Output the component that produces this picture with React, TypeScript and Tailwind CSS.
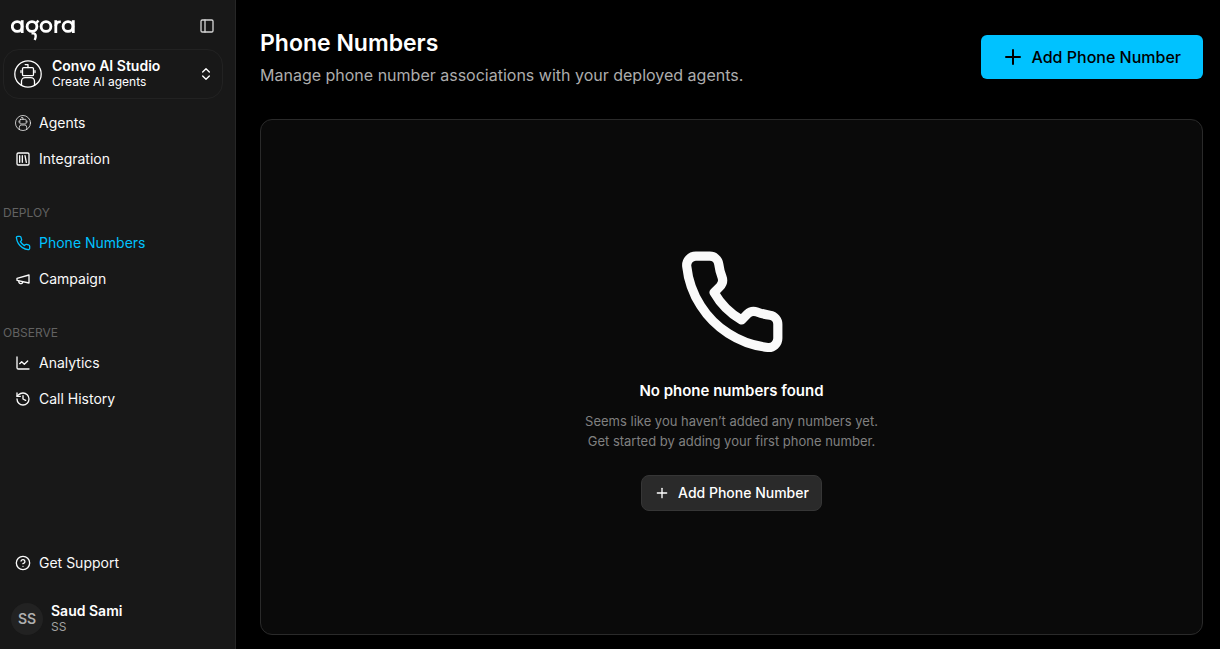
import React from 'react';
import {
  ChartLine,
  ChevronsUpDown,
  CircleHelp,
  History,
  PanelLeft,
  Plus,
  SquareLibrary,
} from 'lucide-react';

type IconProps = { className?: string; strokeWidth?: number };

const AgoraLogo: React.FC = () => (
  <svg
    role="img"
    aria-label="agora"
    className="w-16 h-6"
    viewBox="0 0 64 24"
    fill="none"
    stroke="white"
    strokeWidth="2.8"
  >
    <circle cx="6.2" cy="8.5" r="4.9" />
    <line x1="11.2" y1="2.2" x2="11.2" y2="15" />
    <circle cx="21" cy="8.5" r="4.9" />
    <line x1="25.4" y1="5" x2="27.4" y2="2.4" strokeWidth="2.4" />
    <path d="M20.5 15.4h1.600a2.600 2.600 0 0 1 2.600 2.600c0 1.800-.4 2.800-1 4" strokeWidth="2.4" />
    <circle cx="35" cy="8.5" r="4.9" />
    <line x1="44.8" y1="2.2" x2="44.8" y2="15" />
    <path d="M44.8 8c0-2.8 1.6-4.3 5-4.3" strokeWidth="2.6" />
    <circle cx="57" cy="8.5" r="4.9" />
    <line x1="62.3" y1="2.2" x2="62.3" y2="15" />
  </svg>
);

const AgentIcon: React.FC<IconProps> = ({ className, strokeWidth = 1.3 }) => (
  <svg
    aria-hidden="true"
    className={className}
    viewBox="0 0 28 28"
    fill="none"
    stroke="currentColor"
    strokeWidth={strokeWidth}
    strokeLinecap="round"
    strokeLinejoin="round"
  >
    <circle cx="14" cy="14" r="13.2" />
    <path d="M11.2 4.6h2.8v3" />
    <rect x="8.5" y="7.6" width="11" height="8" rx="1.2" />
    <path d="M7 10.6v2M21 10.6v2" />
    <path d="M7.5 25.4v-4.2a3.6 3.6 0 0 1 3.6-3.6h5.8a3.6 3.6 0 0 1 3.6 3.6v4.2" />
  </svg>
);

const PhoneIcon: React.FC<IconProps> = ({ className }) => (
  <svg
    aria-hidden="true"
    className={className}
    viewBox="0 0 24 24"
    fill="none"
    stroke="currentColor"
    strokeWidth="2"
    strokeLinecap="round"
    strokeLinejoin="round"
  >
    <path d="M22 16.92v3a2 2 0 0 1-2.18 2 19.79 19.79 0 0 1-8.63-3.07 19.5 19.5 0 0 1-6-6 19.79 19.79 0 0 1-3.07-8.67A2 2 0 0 1 4.11 2h3a2 2 0 0 1 2 1.72 12.84 12.84 0 0 0 .7 2.81 2 2 0 0 1-.45 2.11L8.09 9.91a16 16 0 0 0 6 6l1.27-1.27a2 2 0 0 1 2.11-.45 12.84 12.84 0 0 0 2.81.7A2 2 0 0 1 22 16.92z" />
  </svg>
);

const MegaphoneIcon: React.FC<IconProps> = ({ className }) => (
  <svg
    aria-hidden="true"
    className={className}
    viewBox="0 0 24 24"
    fill="none"
    stroke="currentColor"
    strokeWidth="2"
    strokeLinecap="round"
    strokeLinejoin="round"
  >
    <path d="m3 11 18-5v12L3 14v-3z" />
    <path d="M11.6 16.8a3 3 0 1 1-5.8-1.6" />
  </svg>
);

type NavItem = { label: string; icon: React.ElementType; active?: boolean };

const sections: { title?: string; items: NavItem[] }[] = [
  {
    items: [
      { label: 'Agents', icon: AgentIcon },
      { label: 'Integration', icon: SquareLibrary },
    ],
  },
  {
    title: 'DEPLOY',
    items: [
      { label: 'Phone Numbers', icon: PhoneIcon, active: true },
      { label: 'Campaign', icon: MegaphoneIcon },
    ],
  },
  {
    title: 'OBSERVE',
    items: [
      { label: 'Analytics', icon: ChartLine },
      { label: 'Call History', icon: History },
    ],
  },
];

const NavLink: React.FC<{ item: NavItem }> = ({ item }) => {
  const Icon = item.icon;
  return (
    <a
      href="#"
      aria-current={item.active ? 'page' : undefined}
      className={`flex items-center gap-2 h-9 px-3 text-sm ${
        item.active ? 'text-[#00c2ff]' : 'text-neutral-50'
      }`}
    >
      <Icon className="size-4 shrink-0" />
      {item.label}
    </a>
  );
};

const Sidebar: React.FC = () => (
  <aside className="flex flex-col w-59 shrink-0 bg-[#181818] border-r border-[#262626] pl-[3px] pr-3 pb-1.5">
    <div className="flex items-end justify-between h-12 px-2 pb-1.5">
      <AgoraLogo />
      <button type="button" aria-label="Toggle sidebar" className="pb-2 text-neutral-300">
        <PanelLeft className="size-4" />
      </button>
    </div>

    <button
      type="button"
      className="flex items-center gap-2 mt-px h-[50px] pl-2.5 pr-2 rounded-2xl border border-[#222222] text-left text-white"
    >
      <AgentIcon className="size-7 shrink-0" />
      <span className="flex-1 pl-0.5">
        <span className="block text-sm leading-4 font-semibold">Convo AI Studio</span>
        <span className="block text-xs leading-4">Create AI agents</span>
      </span>
      <ChevronsUpDown className="size-4 shrink-0" />
    </button>

    <nav className="flex flex-col gap-6 mt-1.5">
      {sections.map((section, i) => (
        <div key={i}>
          {section.title && (
            <h2 className="h-6 text-xs leading-6 text-[#626262]">{section.title}</h2>
          )}
          {section.items.map((item) => (
            <NavLink key={item.label} item={item} />
          ))}
        </div>
      ))}
    </nav>

    <div className="mt-auto">
      <NavLink item={{ label: 'Get Support', icon: CircleHelp }} />
      <button type="button" className="flex items-center gap-2 mt-3.5 h-12 px-2 text-left">
        <span className="flex items-center justify-center size-8 rounded-full bg-[#222222] text-sm font-semibold text-[#b0b0b0]">
          SS
        </span>
        <span>
          <span className="block text-sm leading-4 font-semibold text-white">Saud Sami</span>
          <span className="block text-xs leading-4 text-neutral-400">SS</span>
        </span>
      </button>
    </div>
  </aside>
);

export default function App() {
  return (
    <div className="flex min-h-screen bg-black font-['Inter',sans-serif]">
      <Sidebar />
      <main className="flex flex-col flex-1 min-w-0 pl-6 pr-[17px] pt-[27px] pb-3.5">
        <header className="flex items-center justify-between">
          <div>
            <h1 className="text-[23px] leading-8 font-semibold text-white">Phone Numbers</h1>
            <p className="mt-1 text-base leading-6 text-[#adadad]">
              Manage phone number associations with your deployed agents.
            </p>
          </div>
          <button
            type="button"
            className="flex items-center gap-1.5 h-11 pl-5 pr-5.5 rounded-md bg-[#00c2ff] text-base font-medium text-black"
          >
            <Plus className="size-6" strokeWidth={2} />
            Add Phone Number
          </button>
        </header>

        <section className="flex flex-col flex-1 items-center justify-center mt-8 pt-1 rounded-xl border border-[#2a2a2a] bg-[#0a0a0a]">
          <PhoneIcon className="size-[110px] text-neutral-50" />
          <h2 className="mt-5.5 text-[15px] leading-6 font-semibold text-white">
            No phone numbers found
          </h2>
          <p className="mt-2 text-[13px] leading-5 text-center text-[#808080]">
            Seems like you haven’t added any numbers yet.
            <br />
            Get started by adding your first phone number.
          </p>
          <button
            type="button"
            className="flex items-center gap-2 mt-6 h-9 px-3 rounded-lg border border-[#363636] bg-[#2a2a2a] text-sm font-medium text-white"
          >
            <Plus className="size-4" />
            Add Phone Number
          </button>
        </section>
      </main>
    </div>
  );
}
